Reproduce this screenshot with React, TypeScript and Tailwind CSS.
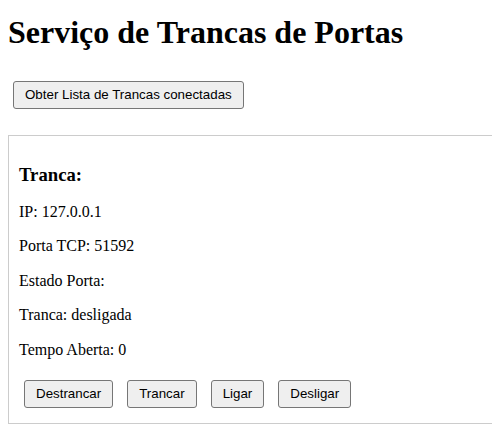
export default function App() {
  const acoes = ["Destrancar", "Trancar", "Ligar", "Desligar"];
  const btn =
    "h-[28.5px] px-[11px] whitespace-nowrap bg-[#efefef] border border-[#767676] rounded-[3px] text-black text-[13.33px] leading-none font-['Liberation_Sans',Arial,sans-serif]";

  return (
    <div className="w-full h-screen overflow-hidden bg-white px-2 text-black font-['Liberation_Serif','Times_New_Roman',serif]">
      <h1 className="mt-[14px] text-[32px] leading-[37px] font-bold">
        Serviço de Trancas de Portas
      </h1>

      <div className="mt-[29.5px] flex">
        <button className={`${btn} ml-[5px] w-[230.5px]`}>
          Obter Lista de Trancas conectadas
        </button>
      </div>

      <div className="mt-[25.5px] w-[520px] border border-[#cccccc] px-[10px] pt-[28px] pb-[15px]">
        <h3 className="text-[18.72px] leading-[21.5px] font-bold">Tranca:</h3>
        <div className="mt-[18px] flex flex-col gap-[16px] text-[16px] leading-[18.4px]">
          <p>IP: 127.0.0.1</p>
          <p>Porta TCP: 51592</p>
          <p>Estado Porta:</p>
          <p>Tranca: desligada</p>
          <p>Tempo Aberta: 0</p>
        </div>
        <div className="mt-[20.5px] ml-[5px] flex gap-[14px]">
          {acoes.map((a) => (
            <button key={a} className={btn}>
              {a}
            </button>
          ))}
        </div>
      </div>
    </div>
  );
}
